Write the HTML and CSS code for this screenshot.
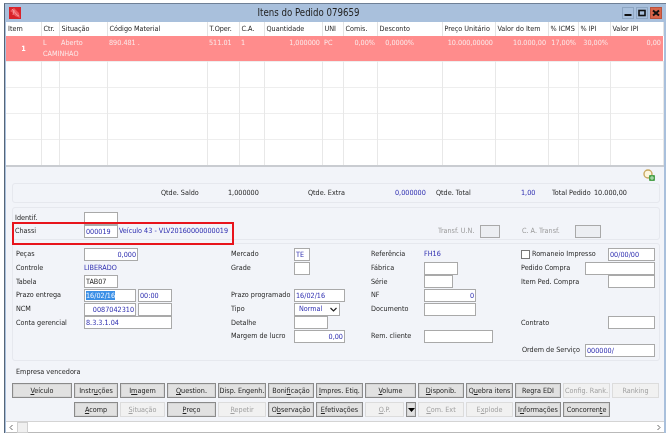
FILE: index.html
```html
<!DOCTYPE html>
<html lang="pt">
<head>
<meta charset="utf-8">
<title>Itens do Pedido 079659</title>
<link rel="stylesheet" href="styles.css">
</head>
<body>
<div class="window">
  <header class="titlebar">
    <svg class="app-icon" width="12" height="12" viewBox="0 0 12 12"><rect width="12" height="12" fill="#d8232a"/><path d="M1 4 5 1l5 5 1 5-5-2-2-3z" fill="#ee5a60"/><path d="M3 2l5 6 2 1M5 3 4 8" stroke="#f7a3a6" stroke-width=".8" fill="none"/></svg>
    <div class="title">Itens do Pedido 079659</div>
    <div class="win-btns">
      <span class="win-btn"><svg width="12" height="12" viewBox="0 0 12 12"><rect x="2.500" y="7" width="7" height="2" fill="#111"/></svg></span>
      <span class="win-btn"><svg width="12" height="12" viewBox="0 0 12 12"><rect x="3" y="3.500" width="6" height="5" fill="none" stroke="#111" stroke-width="1.600"/></svg></span>
      <span class="win-btn close"><svg width="12" height="12" viewBox="0 0 12 12"><path d="M3 3.500l6 5M9 3.500l-6 5" stroke="#111" stroke-width="2"/></svg></span>
    </div>
  </header>

  <table class="items">
    <colgroup>
      <col class="c1"><col class="c2"><col class="c3"><col class="c4"><col class="c5"><col class="c6"><col class="c7"><col class="c8"><col class="c9"><col class="c10"><col class="c11"><col class="c12"><col class="c13"><col class="c14"><col class="c15">
    </colgroup>
    <thead>
      <tr><th>Item</th><th>Ctr.</th><th>Situação</th><th>Código Material</th><th>T.Oper.</th><th>C.A.</th><th>Quantidade</th><th>UNI</th><th>Comis.</th><th>Desconto</th><th>Preço Unitário</th><th>Valor do Item</th><th>% ICMS</th><th>% IPI</th><th>Valor IPI</th></tr>
    </thead>
    <tbody>
      <tr class="sel">
        <td class="num" rowspan="2">1</td><td>L</td><td>Aberto</td><td>890.481 .</td><td>511.01</td><td>1</td><td class="r">1,000000</td><td>PC</td><td class="r">0,00%</td><td class="r pad">0,0000%</td><td class="r">10.000,00000</td><td class="r">10.000,00</td><td class="r">17,00%</td><td class="r">30,00%</td><td class="r">0,00</td>
      </tr>
      <tr class="sel second"><td colspan="14">CAMINHAO</td></tr>
      <tr class="empty"><td></td><td></td><td></td><td></td><td></td><td></td><td></td><td></td><td></td><td></td><td></td><td></td><td></td><td></td><td></td></tr>
      <tr class="empty"><td></td><td></td><td></td><td></td><td></td><td></td><td></td><td></td><td></td><td></td><td></td><td></td><td></td><td></td><td></td></tr>
      <tr class="empty"><td></td><td></td><td></td><td></td><td></td><td></td><td></td><td></td><td></td><td></td><td></td><td></td><td></td><td></td><td></td></tr>
      <tr class="empty"><td></td><td></td><td></td><td></td><td></td><td></td><td></td><td></td><td></td><td></td><td></td><td></td><td></td><td></td><td></td></tr>
    </tbody>
  </table>

  <main class="lower">
    <div class="tools">
      <svg width="13" height="13" viewBox="0 0 13 13"><circle cx="5" cy="5" r="4" fill="#fdf6dd" stroke="#c8a860" stroke-width="1.400"/><rect x="6" y="6" width="6" height="6" rx="1" fill="#4ea24e"/><path d="M9 7v4M7 9h4" stroke="#bfe8bf"/></svg>
    </div>

    <section class="panel totals">
      <span>Qtde. Saldo</span><span>1,000000</span><span>Qtde. Extra</span><span class="blue">0,000000</span><span>Qtde. Total</span><span class="blue">1,00</span><span>Total Pedido</span><span>10.000,00</span>
    </section>

    <section class="panel chassi">
      <span>Identif.</span><span class="field w34"></span>
      <span>Chassi</span><span class="field w34 blue">000019</span><span class="blue">Veículo 43 - VLV20160000000019</span>
      <span class="muted">Transf. U.N.</span><span class="field ro w20"></span><span class="muted">C. A. Transf.</span><span class="field ro w26"></span>
    </section>
    <div class="highlight"></div>

    <section class="panel form">
      <span>Peças</span><span class="field w54 blue r">0,000</span>
      <span>Mercado</span><span class="field w16 blue">TE</span>
      <span>Referência</span><span class="blue">FH16</span>
      <span class="romaneio"><span class="check"></span><span>Romaneio Impresso</span></span><span class="field w47 blue end">00/00/00</span>

      <span>Controle</span><span class="blue">LIBERADO</span>
      <span>Grade</span><span class="field w16"></span>
      <span>Fábrica</span><span class="field w34"></span>
      <span>Pedido Compra</span><span class="field w70"></span>

      <span>Tabela</span><span class="field w34">TAB07</span>
      <span></span><span></span>
      <span>Série</span><span class="field w29"></span>
      <span class="nowrap">Item Ped. Compra</span><span class="field w47 end"></span>

      <span>Prazo entrega</span>
      <span class="pair"><span class="field w52 blue"><mark class="selected">16/02/16</mark></span><span class="field w34 blue">00:00</span></span>
      <span>Prazo programado</span><span class="field w51 blue">16/02/16</span>
      <span>NF</span><span class="field w52 blue r">0</span>
      <span></span><span></span>

      <span>NCM</span>
      <span class="pair"><span class="field w52 blue r">0087042310</span><span class="field w34"></span></span>
      <span>Tipo</span><span class="select blue"><span>Normal</span><svg width="7" height="5" viewBox="0 0 7 5"><path d="M.5 1 3.500 4 6.500 1" fill="none" stroke="#222" stroke-width="1.200"/></svg></span>
      <span>Documento</span><span class="field w52"></span>
      <span></span><span></span>

      <span>Conta gerencial</span><span class="field w88 blue">8.3.3.1.04</span>
      <span>Detalhe</span><span class="field w34"></span>
      <span></span><span></span>
      <span>Contrato</span><span class="field w47 end"></span>

      <span></span><span></span>
      <span>Margem de lucro</span><span class="field w51 blue r">0,00</span>
      <span>Rem. cliente</span><span class="field w69"></span>
      <span></span><span></span>

      <span></span><span></span><span></span><span></span><span></span><span></span>
      <span class="nowrap order">Ordem de Serviço</span><span class="field w70 blue">000000/</span>
    </section>

    <div class="company">Empresa vencedora</div>

    <section class="buttons">
      <button><u>V</u>eículo</button><button>Instr<u>u</u>ções</button><button>I<u>m</u>agem</button><button><u>Q</u>uestion.</button><button>Disp. Engenh.</button><button>Boni<u>f</u>icação</button><button><u>I</u>mpres. Etiq.</button><button><u>V</u>olume</button><button><u>D</u>isponib.</button><button>Q<u>u</u>ebra itens</button><button>Regra EDI</button><button disabled>Config. Rank.</button><button disabled>Ranking</button>

      <span></span><button><u>A</u>comp</button><button disabled><u>S</u>ituação</button><button><u>P</u>reço</button><button disabled><u>R</u>epetir</button><button>O<u>b</u>servação</button><button><u>E</u>fetivações</button>
      <span class="op"><button disabled><u>O</u>.P.</button><button class="drop"><svg width="7" height="4" viewBox="0 0 7 4"><path d="M0 0h7L3.500 4z" fill="#000"/></svg></button></span>
      <button disabled><u>C</u>om. Ext</button><button disabled>E<u>x</u>plode</button><button>I<u>n</u>formações</button><button>Concorren<u>t</u>e</button>
    </section>
  </main>

  <div class="scrollbar">
    <svg width="11" height="11" viewBox="0 0 11 11"><path d="M6.500 3 4 5.500 6.500 8" fill="none" stroke="#666"/></svg>
    <span class="thumb"></span>
    <span class="track"></span>
    <svg width="11" height="11" viewBox="0 0 11 11"><path d="M4.500 3 7 5.500 4.500 8" fill="none" stroke="#666"/></svg>
  </div>
</div>
</body>
</html>
```

FILE: styles.css
```css
* { box-sizing: border-box; }
html, body { margin: 0; height: 100%; background: #fff; }
body { padding: 3px 0 0 4px; font: 7.2px/12px "DejaVu Sans Condensed", "DejaVu Sans", "Noto Sans", sans-serif; color: #262626; overflow: hidden; }

.window { width: 662px; height: 430px; background: #a9c0dc; border-top: 1px solid #6f8096; border-left: 1px solid #566578; padding: 0 2px 0 1px; display: flex; flex-direction: column; filter: blur(.25px); }

.titlebar { height: 18px; flex: none; display: flex; align-items: center; position: relative; padding-left: 3px; }
.title { flex: 1; text-align: center; font-size: 9.600px; color: #222; padding-right: 26px; }
.win-btns { display: flex; gap: 2px; margin-right: 2px; }
.win-btn { width: 12px; height: 12px; display: block; background: #a9c0dc; border: 1px solid #8ea6c2; position: relative; }
.win-btn svg { display: block; margin: -1px; }
.win-btn.close { background: #d8654a; border-color: #b9513b; }

.items { width: 657px; border-collapse: collapse; table-layout: fixed; background: #fff; flex: none; }
.c1 { width: 35px; } .c2 { width: 18px; } .c3 { width: 48px; } .c4 { width: 100px; } .c5 { width: 32px; }
.c6 { width: 25px; } .c7 { width: 58px; } .c8 { width: 21px; } .c9 { width: 34px; } .c10 { width: 65px; }
.c11 { width: 53px; } .c12 { width: 53px; } .c13 { width: 30px; } .c14 { width: 32px; } .c15 { width: 53px; }
.items th { height: 14px; padding: 0 2px; font-weight: 400; text-align: left; border-right: 1px solid #e3e3e3; white-space: nowrap; overflow: hidden; line-height: 12px; }
.items td { padding: 0 2px; white-space: nowrap; overflow: hidden; }
.sel td { background: #ff8c8c; color: #fbe9e9; height: 12px; line-height: 11px; }
.sel.second td { height: 13px; vertical-align: top; }
.sel .num { text-align: center; font-weight: 700; color: #fff; }
.sel .r, .r { text-align: right; }
.sel .pad { padding-right: 28px; }
.empty td { height: 26px; border-top: 1px solid #eee; border-right: 1px solid #e8e8e8; }

.lower { flex: 1; background: #f2f4f9; border-top: 2px solid #c9ccd1; padding: 0 4px 0 6px; position: relative; display: flex; flex-direction: column; min-height: 0; }
.tools { height: 16px; flex: none; display: flex; justify-content: flex-end; align-items: flex-end; padding: 0 4px 1px 0; }
.tools svg { display: block; }

.panel { border: 1px solid #e6e8ee; border-radius: 3px; background: #f2f4f9; flex: none; }
.panel > span { white-space: nowrap; }
.blue { color: #2d2db0; }
.muted { color: #9a9a9a; }
.nowrap { white-space: nowrap; }

.totals { height: 20px; display: grid; grid-template-columns: 67px 80px 87px 41px 85px 31px 42px 1fr; align-items: center; padding-left: 148px; }

.chassi { margin-top: 4px; height: 33px; padding: 4px 0 0 2px; display: grid; grid-template-columns: 69px 35px 319px 42px 42px 42px 1fr; grid-template-rows: 12px 13px; row-gap: 1px; }
.chassi > span:nth-child(1) { grid-column: 1; grid-row: 1; align-self: end; }
.chassi > span:nth-child(2) { grid-column: 2; grid-row: 1; }
.chassi > span:nth-child(3) { grid-column: 1; grid-row: 2; }
.chassi > span:nth-child(4) { grid-column: 2; grid-row: 2; }
.chassi > span:nth-child(5) { grid-column: 3; grid-row: 2; }
.chassi > span:nth-child(6) { grid-column: 4; grid-row: 2; }
.chassi > span:nth-child(7) { grid-column: 5; grid-row: 2; }
.chassi > span:nth-child(8) { grid-column: 6; grid-row: 2; }
.chassi > span:nth-child(9) { grid-column: 7; grid-row: 2; margin-left: 11px; }

.form { margin-top: 3px; height: 118px; padding: 4px 0 0 3px; display: grid; grid-template-columns: 68px 147px 63px 77px 53px 97px 64px 70px; grid-auto-rows: 12.700px; row-gap: 1px; align-items: center; }

.field { display: block; height: 13px; line-height: 11px; padding: 0 1px; background: #fff; border: 1px solid #a9a9a9; white-space: nowrap; overflow: hidden; }
.field.ro { background: #eceef2; }
.field.r { text-align: right; }
.end { justify-self: end; }
.w16 { width: 16px; } .w20 { width: 20px; } .w26 { width: 26px; } .w29 { width: 29px; } .w34 { width: 34px; }
.w47 { width: 47px; } .w51 { width: 51px; } .w52 { width: 52px; } .w54 { width: 54px; } .w69 { width: 69px; } .w70 { width: 70px; } .w88 { width: 88px; }
.pair { display: flex; gap: 2px; }
.selected { background: #3a8fe6; color: #eef5ff; }
.select { width: 46px; height: 13px; display: flex; align-items: center; justify-content: space-between; background: #fff; border: 1px solid #a9a9a9; padding: 0 2px 0 4px; }
.romaneio { display: flex; align-items: center; gap: 2px; }
.check { width: 9px; height: 9px; flex: none; border: 1px solid #777; background: #fff; display: block; }
.order { padding-left: 1px; }

.company { height: 12px; margin-top: 5px; flex: none; padding-left: 4px; }

.buttons { margin-top: 5px; display: grid; grid-template-columns: 60px 44px 45px 49px 48px 46px 47px 51px 46px 47px 46px 47px 47px; column-gap: 2px; row-gap: 4px; grid-auto-rows: 15px; flex: none; width: 647px; }
button { font: inherit; line-height: 11px; padding: 0; margin: 0; color: #222; background: #e1e1e1; border: 1px solid #8a8a8a; box-shadow: inset 0 0 0 1px #d6d6d6; width: 100%; height: 15px; white-space: nowrap; overflow: hidden; }
button:disabled { color: #a0a0a0; background: #f1f1f1; border-color: #dcdcdc; box-shadow: none; }
.op { display: flex; gap: 2px; }
.op button:first-child { width: 40px; }
.op .drop { width: 10px; flex: none; display: flex; align-items: center; justify-content: center; }

.scrollbar { height: 12px; flex: none; display: flex; align-items: center; background: #fff; border-top: 1px solid #d4d4d4; border-bottom: 1px solid #b9b9b9; margin-top: auto; }
.scrollbar svg { flex: none; display: block; }
.thumb { width: 11px; height: 11px; background: #f0f0f0; border: 1px solid #d0d0d0; display: block; flex: none; }
.track { flex: 1; }

.highlight { position: absolute; left: 6px; top: 55px; width: 222px; height: 23px; border: 2px solid #e8141c; pointer-events: none; }
```
